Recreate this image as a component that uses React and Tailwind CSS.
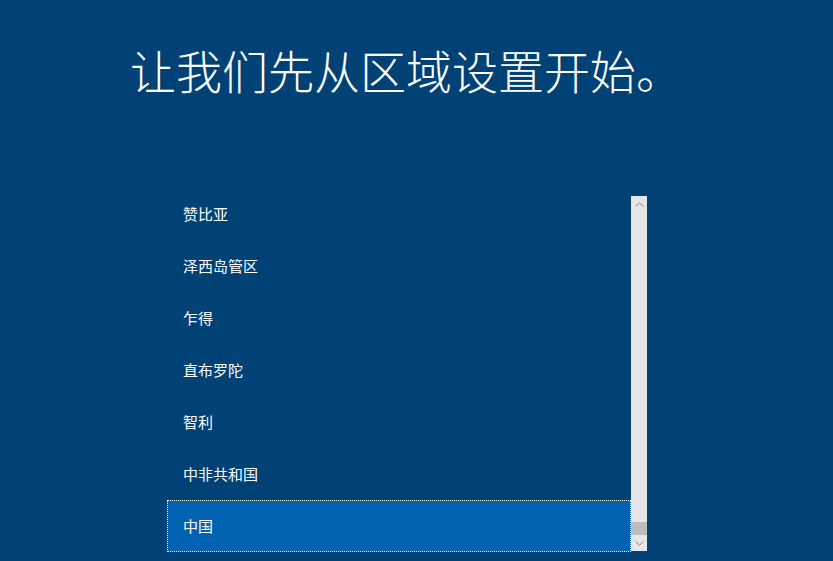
import React from "react";

const items = ["赞比亚", "泽西岛管区", "乍得", "直布罗陀", "智利", "中非共和国", "中国"];

export default function App() {
  return (
    <div
      className="w-[833px] h-[561px] bg-[#004275] overflow-hidden"
      style={{ fontFamily: '"Noto Sans CJK SC", "Noto Sans", sans-serif' }}
    >
      <div className="pt-[39px] pl-[130px]">
        <h1 className="text-[46px] leading-[60px] font-light text-white">
          让我们先从区域设置开始。
        </h1>
      </div>
      <div className="mt-[97px] ml-[167px] flex h-[356px] w-[480px]">
        <div className="w-[464px] h-full overflow-hidden">
          <div className="-mt-[8px]">
            {items.map((t, i) => {
              const sel = i === items.length - 1;
              return (
                <div
                  key={t}
                  className={
                    "h-[52px] flex items-center pl-[15px] text-[15px] text-white " +
                    (sel ? "bg-[#0063b1] border border-dotted border-white" : "border border-transparent")
                  }
                >
                  {t}
                </div>
              );
            })}
          </div>
        </div>
        <div className="w-[16px] h-[355px] bg-[#e6e6e6] flex flex-col">
          <div className="h-[16px] flex items-center justify-center">
            <svg width="9" height="5" viewBox="0 0 9 5">
              <path d="M0.5 4.5 L4.5 0.8 L8.5 4.5" fill="none" stroke="#8a8a8a" strokeWidth="1" />
            </svg>
          </div>
          <div className="flex-1" />
          <div className="h-[13px] bg-[#bcbcbc]" />
          <div className="h-[16px] flex items-center justify-center">
            <svg width="9" height="5" viewBox="0 0 9 5">
              <path d="M0.5 0.5 L4.5 4.2 L8.5 0.5" fill="none" stroke="#8a8a8a" strokeWidth="1" />
            </svg>
          </div>
        </div>
      </div>
    </div>
  );
}
